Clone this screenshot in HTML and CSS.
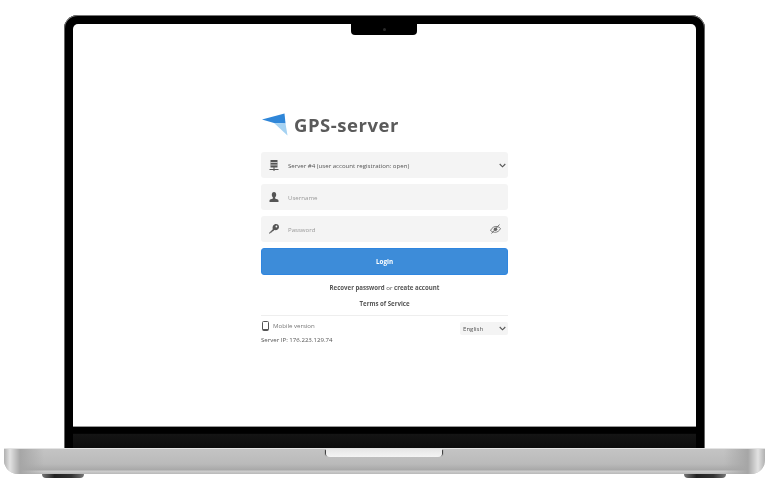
FILE: index.html
```html
<!DOCTYPE html>
<html lang="en">
<head>
    <meta charset="UTF-8">
    <meta name="viewport" content="width=device-width, initial-scale=1.0">
    <title>GPS-server</title>
    <link rel="stylesheet" href="styles.css">
</head>
<body>
    <div class="laptop">
        <div class="lid">
            <div class="notch"><span class="camera"></span></div>
            <div class="screen">
                <div class="login-box">
                    <div class="logo">
                        <svg class="logo-mark" width="26" height="24" viewBox="0 0 26 24">
                            <path d="M0 7.500L22.500 1.500L23.500 11.500L12 11Z" fill="#2f86d8"/>
                            <path d="M12 11L23.500 11.500L25.500 23.500Z" fill="#a5d2f2"/>
                        </svg>
                        <span class="logo-text">GPS-server</span>
                    </div>

                    <div class="field">
                        <svg class="field-icon" width="9" height="11" viewBox="0 0 9 11">
                            <path d="M1 0H8V7.500H1ZM4 7.500H5V9H9V10H5V11H4V10H0V9H4Z" fill="#555"/>
                            <path d="M1 2.500H8M1 5H8" stroke="#f4f4f4" stroke-width=".7"/>
                        </svg>
                        <span class="field-text">Server #4 (user account registration: open)</span>
                        <svg class="field-end chevron" width="7" height="5" viewBox="0 0 7 5">
                            <path d="M.7 1L3.500 3.800L6.300 1" fill="none" stroke="#555" stroke-width="1.100"/>
                        </svg>
                    </div>

                    <div class="field">
                        <svg class="field-icon" width="9" height="10" viewBox="0 0 9 10">
                            <path d="M4.500 0C6 0 6.700 1.200 6.700 2.800C6.700 4 6 5.200 5.600 5.600V6.500C7 7 9 7.500 9 8.500V10H0V8.500C0 7.500 2 7 3.400 6.500V5.600C3 5.200 2.300 4 2.300 2.800C2.300 1.200 3 0 4.500 0Z" fill="#555"/>
                        </svg>
                        <span class="field-text placeholder">Username</span>
                    </div>

                    <div class="field">
                        <svg class="field-icon" width="10" height="10" viewBox="0 0 10 10">
                            <path d="M0 9L3.800 5.200C3 2.500 4.700 0 7 0C8.800 0 10 1.300 10 3C10 5.300 7.800 6.700 5.400 6.100L3.800 7.600H2.800V8.600H1.800L1 9.600H0Z" fill="#555"/>
                            <circle cx="7.400" cy="2.500" r=".9" fill="#f4f4f4"/>
                        </svg>
                        <span class="field-text placeholder">Password</span>
                        <svg class="field-end" width="11" height="10" viewBox="0 0 11 10">
                            <path d="M.5 6.500C2 3.500 4.500 2 7 2.500C8.500 2.800 9.800 3.500 10.500 4.500C9.500 7 7 8.500 4.500 8.300C3 8.200 1.500 7.500 .5 6.500Z" fill="none" stroke="#666" stroke-width=".8"/>
                            <circle cx="5.500" cy="5.300" r="1.800" fill="#666"/>
                            <path d="M9.500 .5L1.500 9.500" stroke="#666" stroke-width=".9"/>
                        </svg>
                    </div>

                    <button class="login-btn">Login</button>

                    <p class="links"><b>Recover password</b> or <b>create account</b></p>
                    <p class="links terms"><b>Terms of Service</b></p>

                    <div class="login-foot">
                        <div>
                            <div class="mobile">
                                <svg width="7" height="10" viewBox="0 0 7 10">
                                    <rect x=".5" y=".5" width="6" height="9" rx="1" fill="none" stroke="#555"/>
                                    <path d="M1 8H6V9.500H1Z" fill="#555"/>
                                </svg>
                                <span>Mobile version</span>
                            </div>
                            <div class="server-ip">Server IP: 176.223.129.74</div>
                        </div>
                        <div class="lang">
                            <span>English</span>
                            <svg width="7" height="5" viewBox="0 0 7 5">
                                <path d="M.7 1L3.500 3.800L6.300 1" fill="none" stroke="#555" stroke-width="1.100"/>
                            </svg>
                        </div>
                    </div>
                </div>
            </div>
            <div class="chin"></div>
        </div>
        <div class="base">
            <div class="thumb"></div>
        </div>
        <div class="feet">
            <span class="foot"></span>
            <span class="foot"></span>
        </div>
    </div>
</body>
</html>
```

FILE: styles.css
```css
body {
    margin: 0;
    background-color: #fff;
    font-family: "Open Sans", sans-serif;
    font-weight: 500;
    color: #555;
    overflow: hidden;
}
.laptop {
    width: 768px;
    height: 481px;
    padding-top: 15px;
    box-sizing: border-box;
}
.lid {
    position: relative;
    width: 641px;
    margin-left: 64px;
    box-sizing: border-box;
    padding: 9px 9px 0;
    background-color: #000;
    border-radius: 14px 14px 0 0;
    box-shadow: inset 0 1px 0 #777, inset 1px 0 0 #666, inset -1px 0 0 #666;
}
.notch {
    position: absolute;
    top: 8px;
    left: 287px;
    width: 66px;
    height: 12px;
    background-color: #000;
    border-radius: 0 0 4px 4px;
    display: flex;
    justify-content: center;
    align-items: center;
}
.camera {
    width: 3px;
    height: 3px;
    border-radius: 50%;
    background-color: #2a2a2a;
}
.screen {
    height: 403px;
    background-color: #fff;
    border-radius: 5px 5px 0 0;
    border-bottom: 1px solid #999;
    box-sizing: border-box;
    padding: 88px 0 0 188px;
}
.chin {
    height: 21px;
    background: linear-gradient(#000 0, #000 30%, #141414 35%, #0c0c0c 100%);
}
.login-box {
    width: 247px;
    will-change: transform;
}
.logo {
    display: flex;
    align-items: center;
    height: 24px;
    margin-bottom: 16px;
}
.logo-mark {
    margin-left: 1px;
}
.logo-text {
    margin-left: 6px;
    font-size: 18.500px;
    font-weight: 700;
    letter-spacing: .55px;
    color: #5a5a5a;
}
.field {
    display: flex;
    align-items: center;
    height: 26px;
    margin-bottom: 6px;
    background-color: #f4f4f4;
    border-radius: 3px;
    font-size: 6.100px;
}
.field-icon {
    flex: none;
    width: 14px;
    margin-left: 6px;
}
.field-text {
    margin-left: 7px;
}
.placeholder {
    color: #999;
}
.field-end {
    margin-left: auto;
    margin-right: 7px;
}
.chevron {
    margin-right: 2px;
}
.login-btn {
    display: block;
    width: 100%;
    height: 27px;
    padding: 0;
    background-color: #3d8cd9;
    color: #fff;
    border: 1px solid #2f86e0;
    border-radius: 3px;
    font-family: "Open Sans", sans-serif;
    font-size: 6.300px;
    font-weight: 700;
    cursor: pointer;
}
.links {
    margin: 8px 0 0;
    text-align: center;
    font-size: 6.100px;
    line-height: 10px;
}
.links b {
    font-weight: 700;
}
.terms {
    margin-top: 6px;
}
.login-foot {
    display: flex;
    justify-content: space-between;
    margin-top: 6px;
    padding-top: 4px;
    border-top: 1px solid #eee;
    font-size: 6.100px;
}
.mobile {
    display: flex;
    align-items: center;
    gap: 4px;
    height: 11px;
    margin-left: 1px;
    color: #777;
}
.server-ip {
    margin-top: 3px;
    line-height: 11px;
}
.lang {
    display: flex;
    align-items: center;
    justify-content: space-between;
    box-sizing: border-box;
    width: 48px;
    height: 13px;
    margin-top: 2px;
    padding: 0 2px 0 3px;
    background-color: #f4f4f4;
    border-radius: 2px;
}
.base {
    position: relative;
    height: 26px;
    margin: 0 3px 0 4px;
    border-top: 1px solid #e4e4e4;
    box-sizing: border-box;
    border-radius: 0 0 14px 14px;
    background:
        linear-gradient(90deg, #b0b0b0 0, #e2e2e2 6px, #a6a6a6 16px, transparent 40px, transparent 720px, #a6a6a6 744px, #e2e2e2 754px, #b0b0b0 100%),
        linear-gradient(#c4c4c4 0, #bababa 60%, #a8a8a8 84%, #cfcfcf 88%, #b8b8b8 100%);
}
.thumb {
    width: 116px;
    height: 8px;
    margin-left: 322px;
    background: linear-gradient(#e6e6e6, #f4f4f4);
    border-radius: 0 0 4px 4px;
    box-shadow: -2px 0 1px -1px #333, 2px 0 1px -1px #333;
}
.feet {
    display: flex;
    justify-content: space-between;
    margin: 0 42px;
}
.foot {
    width: 42px;
    height: 4px;
    background: linear-gradient(90deg, #777, #222 30%, #333 70%, #777);
    border-radius: 0 0 8px 8px;
}
```
